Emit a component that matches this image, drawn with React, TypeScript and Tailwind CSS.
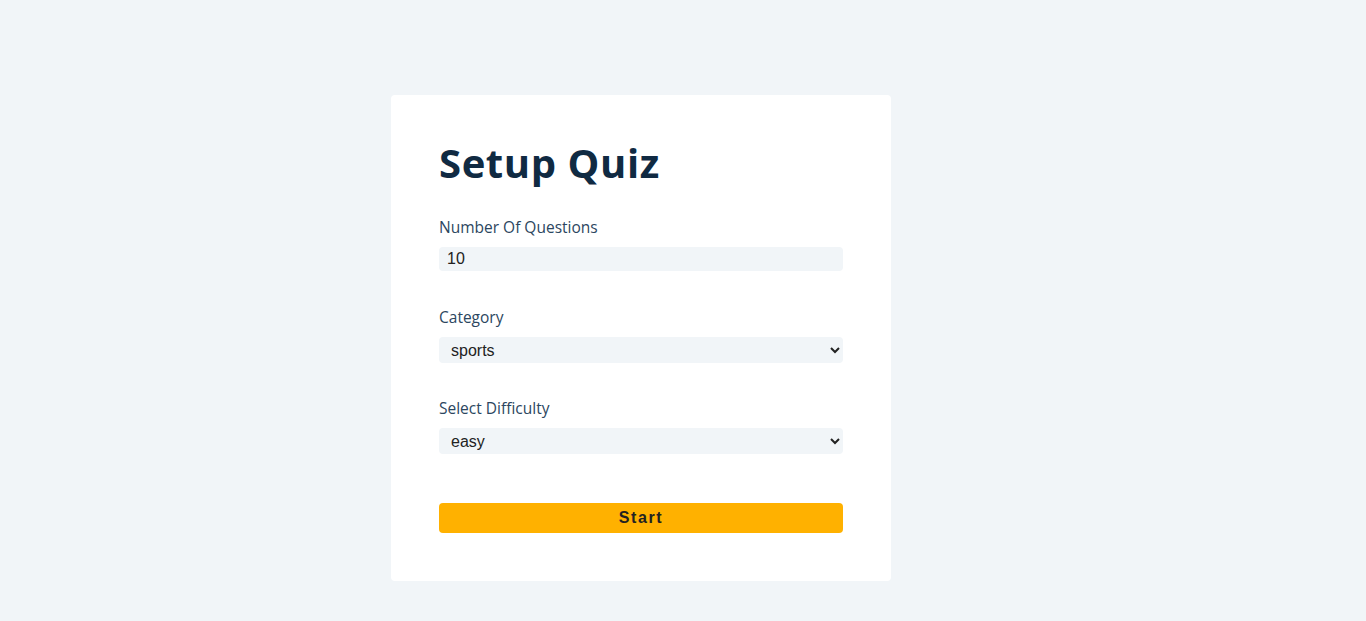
import React from "react";

export default function App() {
  return (
    <div className="min-h-[621px] w-full bg-[#f1f5f8] pt-[95px] pb-[40px]" style={{ fontFamily: '"Open Sans", "Noto Sans", sans-serif' }}>
      <section className="ml-[391px] w-[500px] rounded-[4px] bg-white p-[48px]">
        <form className="flex flex-col" onSubmit={(e) => e.preventDefault()}>
          <h2 className="mb-[32px] h-[40px] text-[40px] font-bold leading-[40px] tracking-[0.6px] text-[#102a42]">
            Setup Quiz
          </h2>
          <div className="mb-[34px] flex flex-col">
            <label htmlFor="amount" className="mb-[8px] h-[24px] text-[15.5px] font-medium leading-[24px] text-[#2c4660]">
              Number Of Questions
            </label>
            <input
              id="amount"
              type="number"
              defaultValue={10}
              className="h-[24px] w-full rounded-[4px] bg-[#f1f5f8] px-[8px] text-[16px] text-[#222] outline-none"
              style={{ fontFamily: '"Liberation Sans", Arial, sans-serif' }}
            />
          </div>
          <div className="mb-[33px] flex flex-col">
            <label htmlFor="category" className="mb-[8px] h-[24px] text-[15.5px] font-medium leading-[24px] text-[#2c4660]">
              Category
            </label>
            <select
              id="category"
              defaultValue="sports"
              className="h-[26px] w-full rounded-[4px] bg-[#f1f5f8] px-[8px] text-[16px] text-[#222] outline-none"
              style={{ fontFamily: '"Liberation Sans", Arial, sans-serif' }}
            >
              <option value="sports">sports</option>
              <option value="history">history</option>
              <option value="politics">politics</option>
            </select>
          </div>
          <div className="mb-[32px] flex flex-col">
            <label htmlFor="difficulty" className="mb-[8px] h-[24px] text-[15.5px] font-medium leading-[24px] text-[#2c4660]">
              Select Difficulty
            </label>
            <select
              id="difficulty"
              defaultValue="easy"
              className="h-[26px] w-full rounded-[4px] bg-[#f1f5f8] px-[8px] text-[16px] text-[#222] outline-none"
              style={{ fontFamily: '"Liberation Sans", Arial, sans-serif' }}
            >
              <option value="easy">easy</option>
              <option value="medium">medium</option>
              <option value="hard">hard</option>
            </select>
          </div>
          <button
            type="submit"
            className="mt-[17px] h-[30px] w-full rounded-[4px] bg-[#ffb100] text-[16px] font-bold tracking-[1.6px] text-[#222]"
            style={{ fontFamily: '"Liberation Sans", Arial, sans-serif' }}
          >
            Start
          </button>
        </form>
      </section>
    </div>
  );
}
